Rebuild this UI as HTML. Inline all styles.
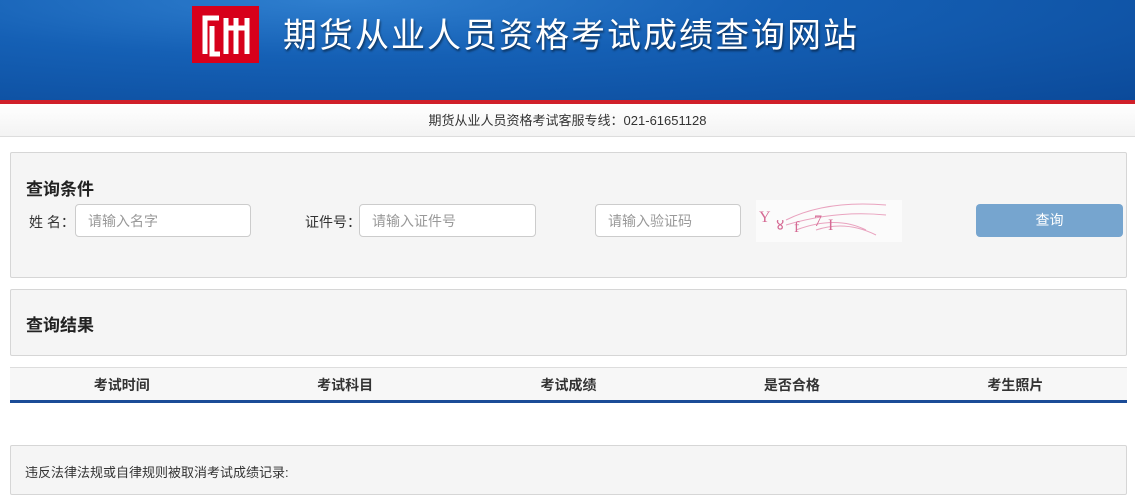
<!DOCTYPE html>
<html><head><meta charset="utf-8"><style>
*{margin:0;padding:0;box-sizing:border-box}
body{width:1135px;height:500px;overflow:hidden;background:#fff;font-family:"Liberation Sans","Noto Sans CJK SC",sans-serif;position:relative;color:#333}
.hd{position:absolute;left:0;top:0;width:1135px;height:100px;background:radial-gradient(ellipse at 30% 0%,#2f7fcf 0%,#1560b5 40%,#0b4a9a 100%)}
.red{position:absolute;left:0;top:100px;width:1135px;height:4px;background:#d0202a}
.bar{position:absolute;left:0;top:104px;width:1135px;height:33px;background:linear-gradient(#fff,#f3f3f3);border-bottom:1px solid #ddd;text-align:center;font-size:13px;line-height:33px;color:#333}
.logo{position:absolute;left:192px;top:6px;width:67px;height:57px;background:#d7001b}
.title{position:absolute;left:283px;top:12px;font-size:34px;color:#fff;letter-spacing:2px;text-shadow:1px 2px 2px rgba(0,0,0,.5);line-height:48px}
.panel{position:absolute;left:10px;width:1117px;background:#f5f5f5;border:1px solid #d6d6d6;border-radius:2px}
.pt{position:absolute;left:15px;font-size:17px;font-weight:bold;color:#222}
.lbl{position:absolute;font-size:14px;color:#333;top:59px}
.inp{position:absolute;top:51px;height:33px;background:#fff;border:1px solid #ccc;border-radius:4px;font-size:14px;color:#999;line-height:33px;padding-left:12px}
.btn{position:absolute;left:965px;top:51px;width:147px;height:33px;background:#76a5cf;border-radius:4px;color:#fff;font-size:14px;text-align:center;line-height:33px}
.th{position:absolute;left:10px;top:367px;width:1117px;height:36px;background:#f7f7f7;border-top:1px solid #ddd;border-bottom:3px solid #1b4c97;display:flex}
.th div{flex:1;text-align:center;font-size:14px;font-weight:bold;line-height:34px;color:#333}
</style></head><body>
<div class="hd"></div>
<div class="logo"><svg width="67" height="57" viewBox="0 0 67 57"><g fill="none" stroke="#fff" stroke-width="5"><path d="M13 48V12h14M20 20v28h8M34 12v36M34 22h22M44 12v36M55 12v36"/></g></svg></div>
<div class="title">期货从业人员资格考试成绩查询网站</div>
<div class="red"></div>
<div class="bar">期货从业人员资格考试客服专线：021-61651128</div>
<div class="panel" style="top:152px;height:126px">
<div class="pt" style="top:22px">查询条件</div>
<div class="lbl" style="left:18px">姓 名：</div>
<div class="inp" style="left:64px;width:176px">请输入名字</div>
<div class="lbl" style="left:294px">证件号：</div>
<div class="inp" style="left:348px;width:177px">请输入证件号</div>
<div class="inp" style="left:584px;width:146px">请输入验证码</div>
<svg style="position:absolute;left:745px;top:47px" width="146" height="42"><rect width="146" height="42" fill="#fbfbfb"/><g fill="none" stroke="#e9a3bf" stroke-width="1"><path d="M30 20Q70 0 130 5M30 25Q80 10 130 15M60 30Q90 20 120 35M40 30Q80 15 110 30"/></g><g font-family="Liberation Serif,serif" font-size="16" fill="#d56a94"><text x="3" y="22">Y</text><text x="20" y="30">४</text><text x="38" y="32">f</text><text x="58" y="26">7</text><text x="72" y="30">I</text></g></svg>
<div class="btn">查询</div>
</div>
<div class="panel" style="top:289px;height:67px">
<div class="pt" style="top:21px">查询结果</div>
</div>
<div class="th"><div>考试时间</div><div>考试科目</div><div>考试成绩</div><div>是否合格</div><div>考生照片</div></div>
<div class="panel" style="top:445px;height:50px">
<div style="position:absolute;left:14px;top:16px;font-size:13px;color:#333">违反法律法规或自律规则被取消考试成绩记录:</div>
</div>
</body></html>
